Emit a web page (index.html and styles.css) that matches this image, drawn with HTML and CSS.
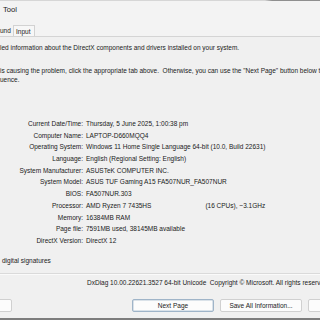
FILE: index.html
```html
<!DOCTYPE html>
<html lang="en">
<head>
  <meta charset="UTF-8" />
  <title>DirectX Diagnostic Tool</title>
  <link rel="stylesheet" href="styles.css">
</head>
<body>
  <div class="window">
    <div class="topline"></div>
    <div class="titlebar">Tool</div>

    <div class="tabs">
      <div class="tab">und</div>
      <div class="tab tab-boxed">Input</div>
    </div>

    <div class="panel">
      <p class="intro">led information about the DirectX components and drivers installed on your system.</p>
      <p class="help">is causing the problem, click the appropriate tab above.&nbsp; Otherwise, you can use the "Next Page" button below to<br>uence.</p>

      <div class="info">
        <span class="label">Current Date/Time:</span><span>Thursday, 5 June 2025, 1:00:38 pm</span>
        <span class="label">Computer Name:</span><span>LAPTOP-D660MQQ4</span>
        <span class="label">Operating System:</span><span>Windows 11 Home Single Language 64-bit (10.0, Build 22631)</span>
        <span class="label">Language:</span><span>English (Regional Setting: English)</span>
        <span class="label">System Manufacturer:</span><span>ASUSTeK COMPUTER INC.</span>
        <span class="label">System Model:</span><span>ASUS TUF Gaming A15 FA507NUR_FA507NUR</span>
        <span class="label">BIOS:</span><span>FA507NUR.303</span>
        <span class="label">Processor:</span><span>AMD Ryzen 7 7435HS<span class="cpus">(16 CPUs), ~3.1GHz</span></span>
        <span class="label">Memory:</span><span>16384MB RAM</span>
        <span class="label">Page file:</span><span>7591MB used, 38145MB available</span>
        <span class="label">DirectX Version:</span><span>DirectX 12</span>
      </div>

      <p class="whql">digital signatures</p>
    </div>

    <div class="footer">
      <p class="version">DxDiag 10.00.22621.3527 64-bit Unicode&nbsp; Copyright © Microsoft. All rights reserved.</p>
      <div class="buttons">
        <button class="btn btn-help">Help</button>
        <button class="btn btn-next">Next Page</button>
        <button class="btn">Save All Information...</button>
        <button class="btn btn-exit">Exit</button>
      </div>
    </div>
    <div class="bottomline"></div>
  </div>
</body>
</html>
```

FILE: styles.css
```css
* {
  box-sizing: border-box;
  margin: 0;
  padding: 0;
}

body {
  font-family: 'Liberation Sans', Arial, sans-serif;
  font-size: 6.5px;
  color: #1a1a1a;
  background: #f0f0f0;
  overflow: hidden;
}

.window {
  width: 320px;
  height: 320px;
  overflow: hidden;
  background: #f0f0f0;
}

.topline {
  height: 1px;
  background: linear-gradient(to right, #d6d6d6 0, #d6d6d6 265px, #8f8f8f 272px);
}

.titlebar {
  height: 21px;
  padding: 4px 0 0 3px;
  font-size: 7.6px;
  line-height: 9px;
  background: #f3f3f3;
}

.tabs {
  display: flex;
  align-items: flex-end;
  height: 15px;
  border-bottom: 1px solid #d4d4d4;
  background: #f3f3f3;
}

.tab {
  height: 11px;
  line-height: 11px;
  padding: 0 2px;
  white-space: nowrap;
}

.tab:first-child {
  width: 13px;
  padding: 0 3px 0 0;
  text-align: right;
}

.tab-boxed {
  width: 22px;
  border: 1px solid #d2d2d2;
  border-bottom: none;
  background: #f7f7f7;
}

.panel {
  padding-top: 7px;
}

.intro,
.help,
.whql {
  line-height: 8.3px;
  white-space: nowrap;
}

.help {
  margin-top: 15px;
}

.info {
  display: grid;
  grid-template-columns: 83px auto;
  column-gap: 3px;
  margin-top: 34px;
  line-height: 11.7px;
  white-space: nowrap;
}

.label {
  text-align: right;
}

.cpus {
  margin-left: 54px;
}

.whql {
  margin-top: 10px;
  padding-left: 2px;
}

.footer {
  margin-top: 8px;
  border-top: 1px solid #dadada;
  box-shadow: inset 0 1px 0 #fafafa;
}

.version {
  padding: 4px 0 0 87px;
  line-height: 9px;
  white-space: nowrap;
}

.buttons {
  display: flex;
  margin-top: 12px;
}

.btn {
  height: 13px;
  width: 82px;
  font-family: inherit;
  font-size: 6.5px;
  color: #1a1a1a;
  background: #fcfcfc;
  border: 1px solid #d0d0d0;
  border-radius: 2px;
  flex-shrink: 0;
  margin-right: 6px;
}

.btn-help {
  width: 40px;
  margin-left: -28px;
  margin-right: 120px;
  color: transparent;
}

.btn-next {
  border-color: #9fb4c8;
  box-shadow: inset 0 0 0 0.5px #b7c7d6;
}

.bottomline {
  margin-top: 6px;
  height: 2px;
  background: #7d7d7d;
}
```
